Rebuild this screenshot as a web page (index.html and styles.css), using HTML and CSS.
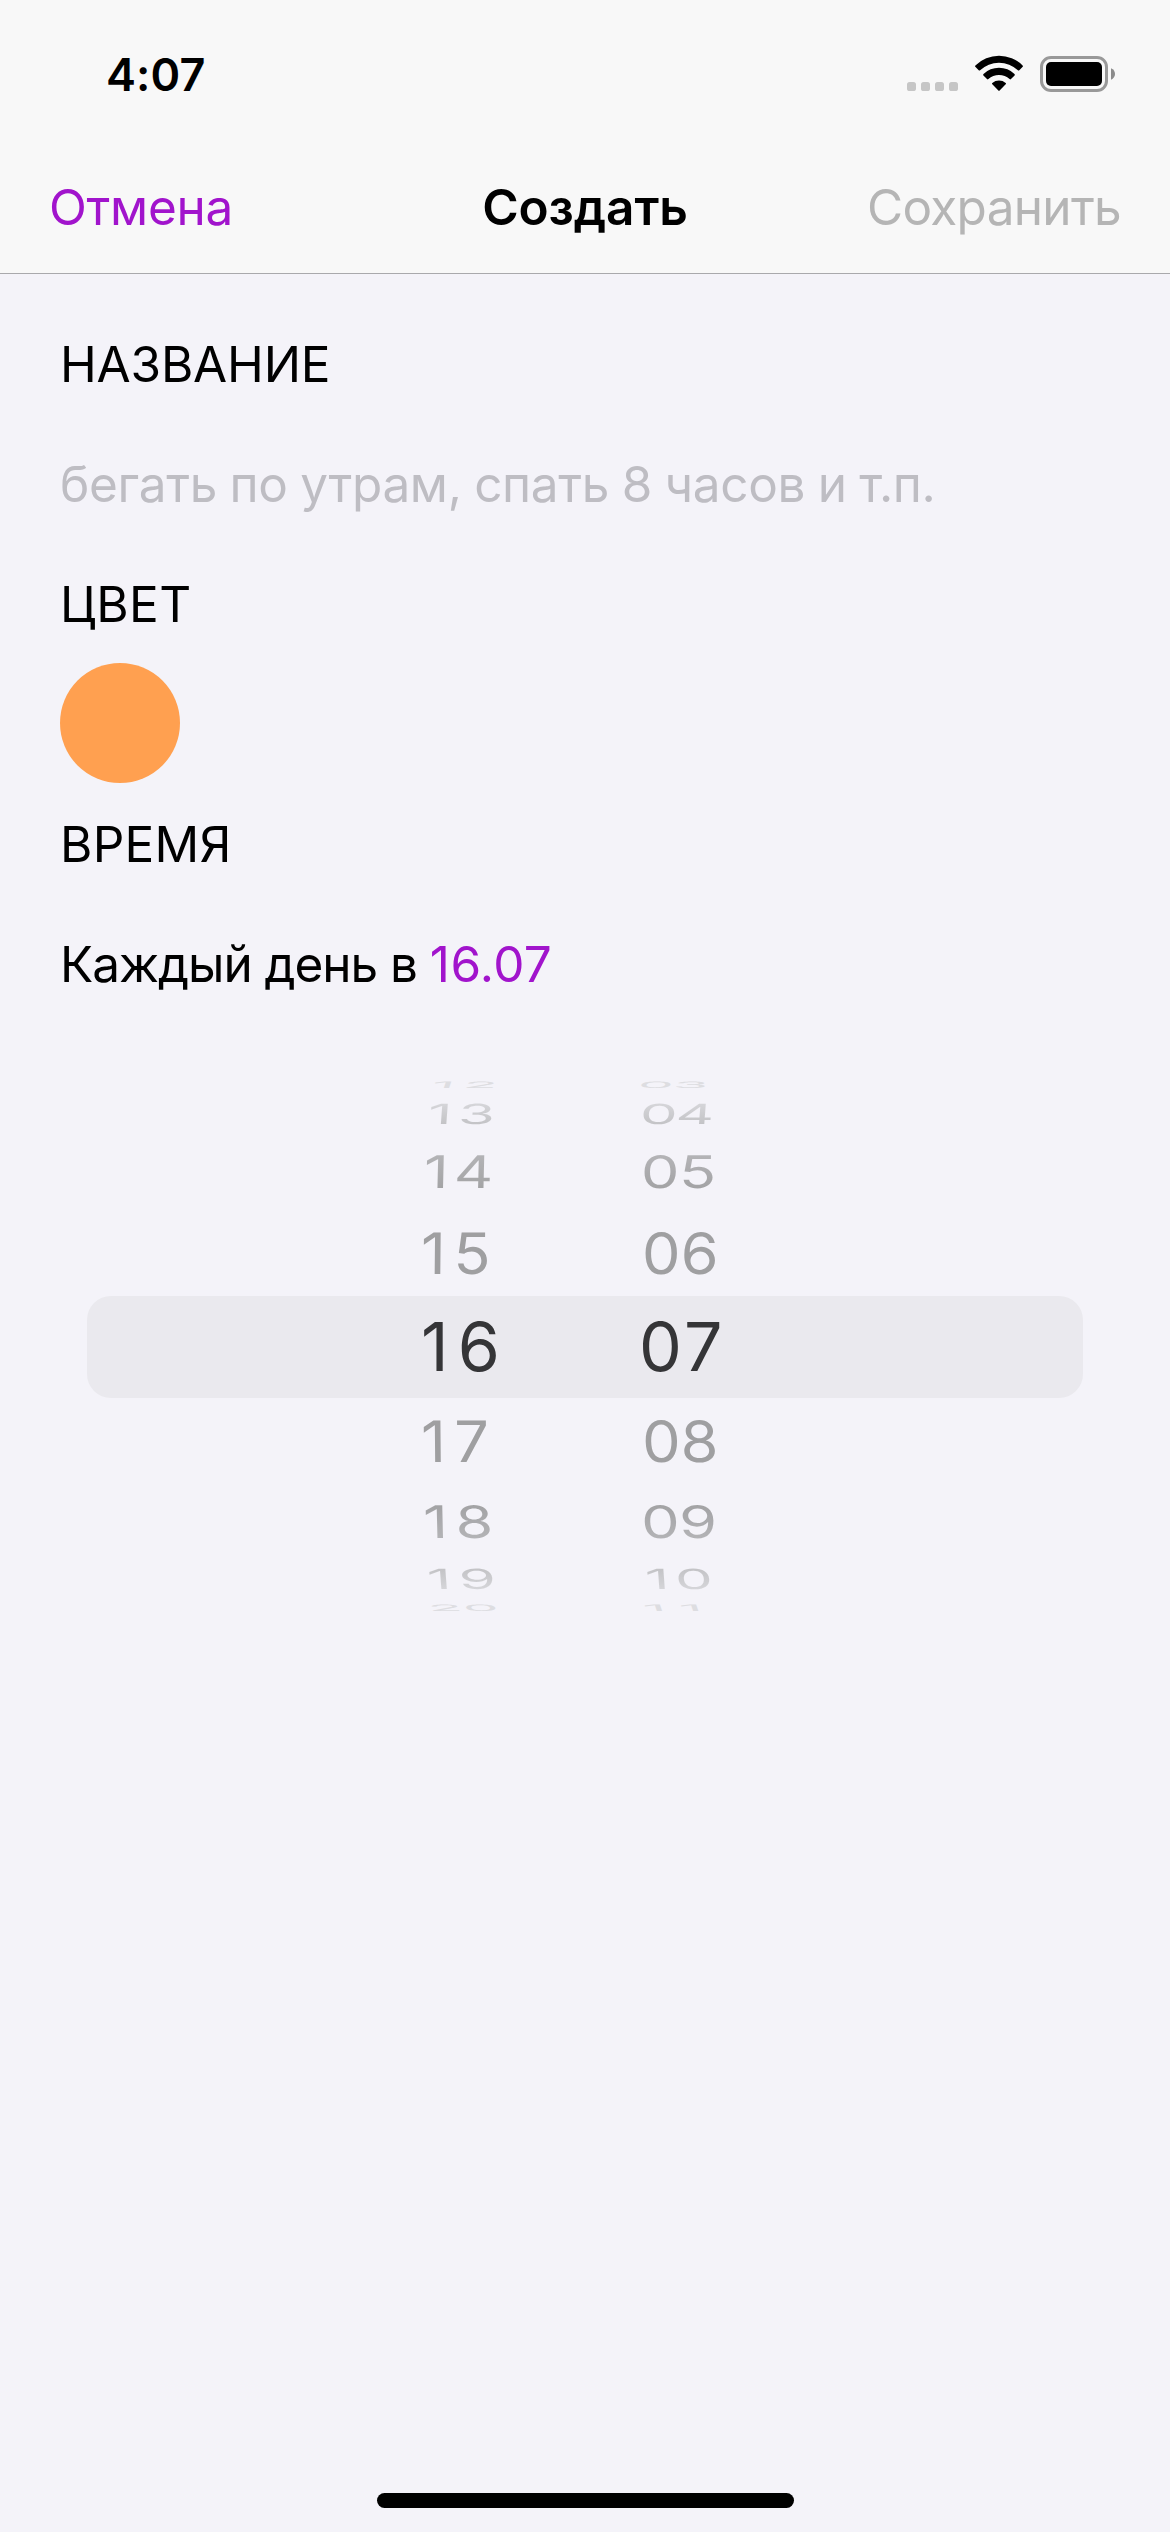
FILE: index.html
```html
<!DOCTYPE html>
<html lang="ru">
<head>
<meta charset="utf-8">
<title>Создать</title>
<link rel="stylesheet" href="styles.css">
</head>
<body>
<div class="screen">
  <header class="header">
    <div class="status">
      <span class="clock">4:07</span>
      <div class="status-icons">
        <svg class="signal" width="51" height="9" viewBox="0 0 51 9" fill="#c6c6c6">
          <rect width="9" height="9" rx="2.6"/><rect x="14" width="9" height="9" rx="2.6"/><rect x="28" width="9" height="9" rx="2.6"/><rect x="42" width="9" height="9" rx="2.6"/>
        </svg>
        <svg class="wifi" width="48" height="36" viewBox="0 0 48 36">
          <path d="M.4 10.4A33.5 33.5 0 0 1 47.6 10.4Q48.3 11.1 47.7 11.8L44.3 15.3Q43.6 15.9 42.9 15.3A27.3 27.3 0 0 0 5.1 15.3Q4.4 15.9 3.7 15.3L.3 11.8Q-.3 11.1 .4 10.4Z"/>
          <path d="M8.5 19.1A22 22 0 0 1 39.5 19.1Q40.2 19.8 39.6 20.5L36 24.1Q35.3 24.7 34.6 24.1A15.8 15.8 0 0 0 13.4 24.1Q12.7 24.7 12 24.1L8.4 20.5Q7.8 19.8 8.5 19.1Z"/>
          <path d="M17.3 28A10.5 10.5 0 0 1 30.7 28Q31.3 28.7 30.7 29.3L24.6 35.6Q24 36.2 23.4 35.6L17.3 29.3Q16.7 28.7 17.3 28Z"/>
        </svg>
        <svg class="battery" width="75" height="36" viewBox="0 0 75 36">
          <rect x="1.5" y="1.5" width="65" height="33" rx="9.5" fill="none" stroke="#999" stroke-width="3"/>
          <rect x="6" y="6" width="56" height="24" rx="5"/>
          <path d="M71 12.3C73.6 13.4 75 15.6 75 18S73.6 22.6 71 23.7Z" fill="#8c8c8c"/>
        </svg>
      </div>
    </div>
    <nav class="nav">
      <span class="cancel">Отмена</span>
      <span class="title">Создать</span>
      <span class="save">Сохранить</span>
    </nav>
  </header>

  <main class="form">
    <div class="row name-label">НАЗВАНИЕ</div>
    <div class="row placeholder">бегать по утрам, спать 8 часов и т.п.</div>
    <div class="row color-label">ЦВЕТ</div>
    <div class="swatch"></div>
    <div class="row time-label">ВРЕМЯ</div>
    <div class="row schedule"><span class="every">Каждый день в&nbsp;</span><span class="time">16.07</span></div>
  </main>

  <section class="picker">
    <div class="line edge up4"><span class="n12">12</span><span class="n03">03</span></div>
    <div class="line far up3"><span class="n13">13</span><span class="n04">04</span></div>
    <div class="line mid up2"><span class="n14">14</span><span class="n05">05</span></div>
    <div class="line near up1"><span class="n15">15</span><span class="n06">06</span></div>
    <div class="line current"><span class="n16">16</span><span class="n07">07</span></div>
    <div class="line near down1"><span class="n17">17</span><span class="n08">08</span></div>
    <div class="line mid down2"><span class="n18">18</span><span class="n09">09</span></div>
    <div class="line far down3"><span class="n19">19</span><span class="n10">10</span></div>
    <div class="line edge down4"><span class="n20">20</span><span class="n11">11</span></div>
  </section>

  <div class="home"></div>
</div>
</body>
</html>
```
FILE: styles.css
```css
* { box-sizing: border-box; }
body {
  margin: 0;
  background: #f4f3f9;
  color: #000;
  font-family: Inter, "Liberation Sans", sans-serif;
}
.screen {
  width: 1170px;
  height: 2532px;
  display: flex;
  flex-direction: column;
  overflow: hidden;
}

/* Header */
.header {
  height: 274px;
  background: #f8f8f8;
  border-bottom: 1px solid #a9a9ac;
}
.status {
  height: 141px;
  display: flex;
  justify-content: space-between;
  padding: 0 55px 0 106px;
}
.clock {
  font-size: 45px;
  font-weight: 600;
  line-height: 149px;
  letter-spacing: .1px;
}
.status-icons {
  display: flex;
  align-items: flex-end;
  height: 92px;
}
.signal { margin: 0 17px 1px 0; }
.wifi { margin: 0 17px 1px 0; }
.nav {
  height: 132px;
  display: grid;
  grid-template-columns: 1fr auto 1fr;
  padding: 0 49px;
  font-size: 49.5px;
  line-height: 132px;
}
.cancel { color: #a114cc; letter-spacing: -.3px; }
.title { font-weight: 600; letter-spacing: -.1px; }
.save { color: #b5b5b5; letter-spacing: -.7px; text-align: right; }

/* Form */
.form {
  padding: 29px 60px 0;
  font-size: 49.5px;
}
.row {
  height: 120px;
  padding-top: 2px;
  line-height: 118px;
  white-space: nowrap;
}
.name-label { letter-spacing: -.2px; }
.placeholder { color: #bebdc3; letter-spacing: -.34px; word-spacing: -1px; }
.color-label { letter-spacing: .5px; }
.time-label { letter-spacing: .25px; }
.every { letter-spacing: -1.05px; }
.time { color: #a114cc; letter-spacing: .4px; }
.swatch {
  width: 120px;
  height: 120px;
  border-radius: 50%;
  background: #ffa050;
}

/* Time wheel */
.picker {
  height: 648px;
  padding: 53px 87px 0;
  font-size: 68px;
  line-height: 82px;
}
.line {
  display: grid;
  grid-template-columns: 217px 217px;
  grid-template-rows: 100%;
  align-items: center;
  padding-left: 334px;
}
.line span {
  justify-self: start;
  transform-origin: 0 50%;
  transform: translateX(var(--dx, 0)) scale(var(--sx), var(--sy)) skewX(var(--skew, 0deg));
}
.current {
  height: 102px;
  --sx: 1;
  --sy: 1;
  padding-bottom: 2px;
  background: #eae9ee;
  border-radius: 24px;
  color: #353537;
}
.near { height: 86px; --sx: .9; --sy: .84; color: #9f9fa1; }
.mid { height: 77px; --sx: .9; --sy: .66; }
.far { height: 39px; --sx: .88; --sy: .41; }
.edge { height: 18px; --sx: .83; --sy: .13; color: #dddde1; }
.down2 { height: 75px; }
.down3 { height: 40px; }
.up1 { --skew: -.5deg; }
.up2 { --skew: -1deg; }
.up3 { --skew: -2deg; }
.up4 { --skew: -3deg; }
.down1 { --skew: .5deg; }
.down2 { --skew: 1deg; }
.down3 { --skew: 2deg; }
.down4 { --skew: 3deg; }
.mid span, .far span {
  color: transparent;
  -webkit-background-clip: text;
  background-clip: text;
}
.up2 span { background-image: linear-gradient(#b3b3b6 20%, #a3a3a5 80%); }
.down2 span { background-image: linear-gradient(#a3a3a5 20%, #b3b3b6 80%); }
.up3 span { background-image: linear-gradient(#d5d5d9 20%, #c3c3c6 80%); }
.down3 span { background-image: linear-gradient(#c3c3c6 20%, #d5d5d9 80%); }

.n12 { --dx: 11px; letter-spacing: 10px; }
.n13 { --dx: 7px; letter-spacing: 6.8px; }
.n14 { --dx: 3px; letter-spacing: 5.6px; }
.n15 { letter-spacing: 8.4px; }
.n16 { letter-spacing: 9px; }
.n17 { letter-spacing: 9.4px; }
.n18 { --dx: 2px; letter-spacing: 8.4px; }
.n19 { --dx: 6px; letter-spacing: 8.4px; }
.n20 { --dx: 7px; letter-spacing: .6px; }
.n04 { --dx: 2px; letter-spacing: -2.2px; }
.n05 { --dx: 3px; letter-spacing: -.6px; }
.n06 { --dx: 4px; }
.n07 { --dx: 1px; letter-spacing: 3.5px; }
.n08 { --dx: 4px; }
.n09 { --dx: 3px; letter-spacing: -.6px; }
.n10 { --dx: 7px; letter-spacing: 6.3px; }
.n11 { --dx: 5px; letter-spacing: 16px; }

/* Home indicator */
.home {
  width: 417px;
  height: 15px;
  margin: auto auto 24px 377px;
  border-radius: 8px;
  background: #000;
}
```
